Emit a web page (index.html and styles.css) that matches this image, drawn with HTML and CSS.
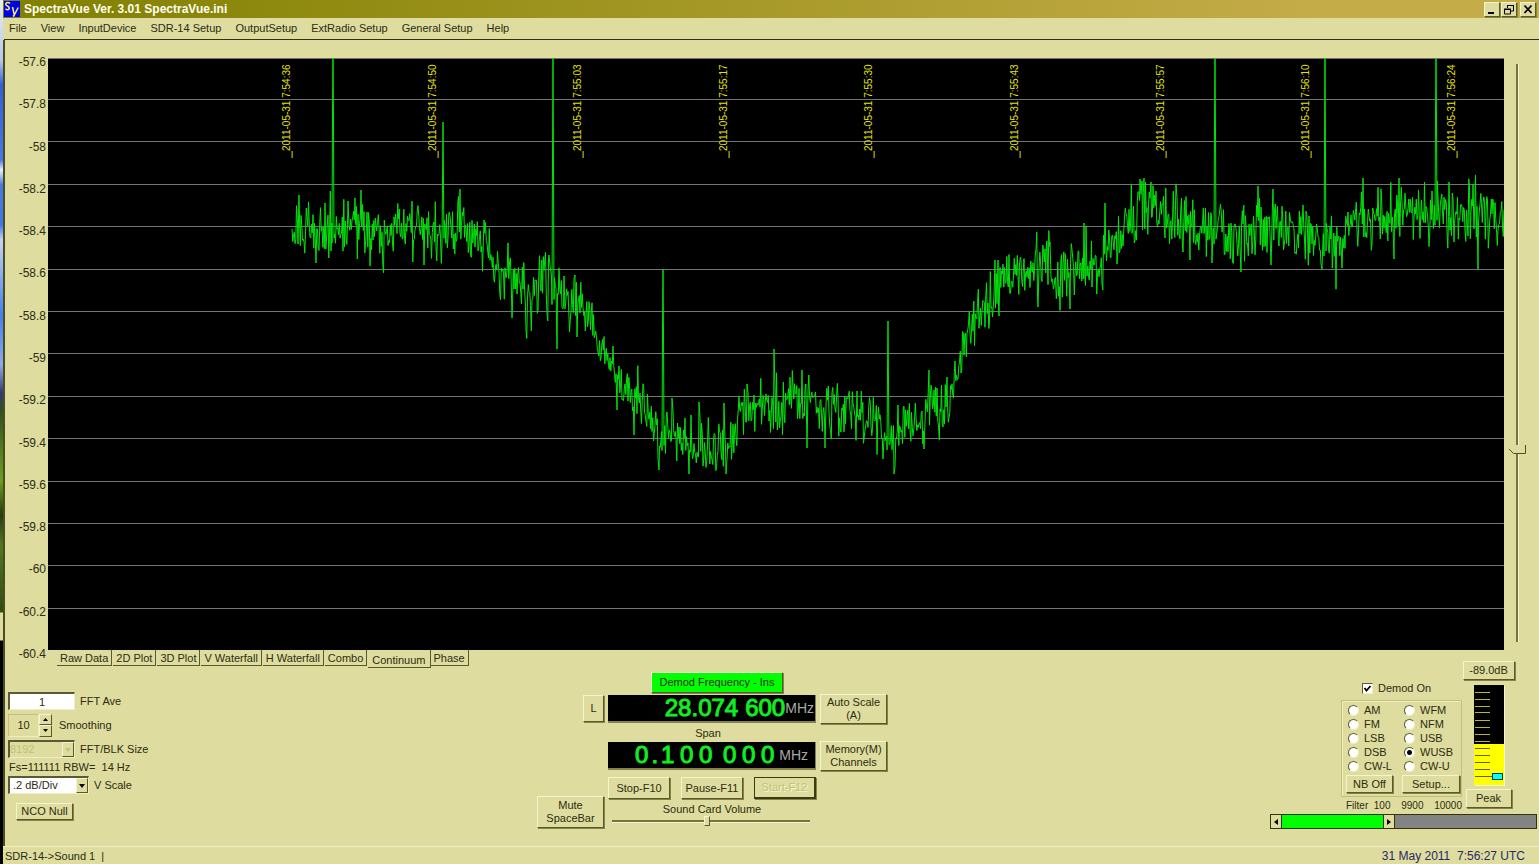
FILE: index.html
```html
<!DOCTYPE html>
<html lang="en">
<head>
<meta charset="utf-8">
<title>SpectraVue Ver. 3.01 SpectraVue.ini</title>
<link rel="stylesheet" href="styles.css">
</head>
<body>
<div class="desktop">
<div class="window">
  <header class="titlebar">
    <svg class="app-icon" width="16" height="16" viewBox="0 0 16 16" aria-hidden="true"><rect width="16" height="16" fill="#0000f0"/><path d="M6 2.500Q4.500 1 2.500 1.800Q.8 3 2.500 4.500L4.700 5.800Q6 7.500 4.300 8.500Q2.500 9 1.500 7.800M8.500 6L10.300 14L14.200 6.500M10.300 14L9 15.500" fill="none" stroke="#f4f060" stroke-width="1.500"/></svg>
    <h1 class="title">SpectraVue Ver. 3.01 SpectraVue.ini</h1>
    <div class="window-buttons">
      <button class="win-btn" aria-label="Minimize"><svg width="12" height="11" viewBox="0 0 12 11"><path d="M2 9h6" stroke="#000" stroke-width="2"/></svg></button>
      <button class="win-btn" aria-label="Restore"><svg width="12" height="11" viewBox="0 0 12 11"><path d="M4.500 4V1.500h6V7H8M4 1.500h7M1.500 5.500h6V10h-6zM1 5h7" fill="none" stroke="#000"/></svg></button>
      <button class="win-btn win-close" aria-label="Close"><svg width="12" height="11" viewBox="0 0 12 11"><path d="M2.500 1.500L9.500 9M9.500 1.500L2.500 9" stroke="#000" stroke-width="1.800"/></svg></button>
    </div>
  </header>
  <nav class="menubar">
    <button class="menu">File</button><button class="menu">View</button><button class="menu">InputDevice</button><button class="menu">SDR-14 Setup</button><button class="menu">OutputSetup</button><button class="menu">ExtRadio Setup</button><button class="menu">General Setup</button><button class="menu">Help</button>
  </nav>
  <main class="client">
    <section class="chart">
      <div class="axis">
        <span>-57.6</span><span>-57.8</span><span>-58</span><span>-58.2</span><span>-58.4</span><span>-58.6</span><span>-58.8</span><span>-59</span><span>-59.2</span><span>-59.4</span><span>-59.6</span><span>-59.8</span><span>-60</span><span>-60.2</span><span>-60.4</span>
      </div>
      <div class="plot">
        <svg class="trace" viewBox="48 58 1456 592" preserveAspectRatio="none" role="img" aria-label="Continuum plot">
          <g id="grid" class="grid-lines"></g>
          <path id="trace" class="trace-line"/>
        </svg>
        <div class="times">
          <span class="time">2011-05-31 7:54:36</span><span class="time">2011-05-31 7:54:50</span><span class="time">2011-05-31 7:55:03</span><span class="time">2011-05-31 7:55:17</span><span class="time">2011-05-31 7:55:30</span><span class="time">2011-05-31 7:55:43</span><span class="time">2011-05-31 7:55:57</span><span class="time">2011-05-31 7:56:10</span><span class="time">2011-05-31 7:56:24</span>
        </div>
      </div>
      <div class="level"><input class="level-slider" type="range" min="0" max="100" value="33" aria-label="Vertical offset"></div>
    </section>
    <section class="panel">
      <div class="tabs" role="tablist">
        <button class="tab" role="tab">Raw Data</button><button class="tab" role="tab">2D Plot</button><button class="tab" role="tab">3D Plot</button><button class="tab" role="tab">V Waterfall</button><button class="tab" role="tab">H Waterfall</button><button class="tab" role="tab">Combo</button><button class="tab tab-active" role="tab" aria-selected="true">Continuum</button><button class="tab" role="tab">Phase</button>
      </div>
      <div class="fft">
        <div class="field"><input class="box fft-ave" id="ave" type="text" value="1"><label for="ave">FFT Ave</label></div>
        <div class="field field-smooth">
          <span class="spin"><input class="spin-box" id="smooth" type="text" value="10"><span class="spin-buttons"><button class="spin-btn" aria-label="Increase"><svg width="5" height="3" viewBox="0 0 5 3"><path d="M0 3L2.500 0L5 3z"/></svg></button><button class="spin-btn" aria-label="Decrease"><svg width="5" height="3" viewBox="0 0 5 3"><path d="M0 0L2.500 3L5 0z"/></svg></button></span></span>
          <label for="smooth">Smoothing</label>
        </div>
        <div class="field field-size"><span class="combo combo-off"><select class="box" id="blk" disabled><option>8192</option></select><span class="arrow"><svg width="6" height="4" viewBox="0 0 6 4"><path d="M0 0h6L3 4z"/></svg></span></span><label for="blk">FFT/BLK Size</label></div>
        <p class="rbw">Fs=111111 RBW=&nbsp; 14 Hz</p>
        <div class="field"><span class="combo combo-wide"><select class="box" id="vscale"><option>.2 dB/Div</option></select><span class="arrow"><svg width="6" height="4" viewBox="0 0 6 4"><path d="M0 0h6L3 4z"/></svg></span></span><label for="vscale">V Scale</label></div>
        <button class="btn nco">NCO Null</button>
      </div>
      <div class="tuning">
        <button class="btn demod-freq">Demod Frequency - Ins</button>
        <button class="btn lock">L</button>
        <output class="display"><span class="digits">28.074</span><span class="digits">600</span><span class="unit">MHz</span></output>
        <button class="btn tall">Auto Scale<br>(A)</button>
        <span class="span-label">Span</span>
        <output class="display display-span"><span class="cells"><i>0</i><i class="dot">.</i><i>1</i><i>0</i><i>0</i></span><span class="cells"><i>0</i><i>0</i><i>0</i></span><span class="unit">MHz</span></output>
        <button class="btn tall">Memory(M)<br>Channels</button>
        <button class="btn tall mute">Mute<br>SpaceBar</button>
        <div class="run">
          <div class="run-buttons"><button class="btn">Stop-F10</button><button class="btn">Pause-F11</button><button class="btn start" disabled>Start-F12</button></div>
          <label class="volume-label" for="volume">Sound Card Volume</label>
          <input class="volume" id="volume" type="range" min="0" max="100" value="48">
        </div>
      </div>
      <div class="receiver">
        <div class="receiver-main">
          <div class="demod">
            <label class="demod-on"><input class="check" type="checkbox" checked>Demod On</label>
            <fieldset class="modes" aria-label="Demodulation mode">
              <div class="mode-grid">
                <label class="mode"><input type="radio" name="mode">AM</label><label class="mode"><input type="radio" name="mode">WFM</label>
                <label class="mode"><input type="radio" name="mode">FM</label><label class="mode"><input type="radio" name="mode">NFM</label>
                <label class="mode"><input type="radio" name="mode">LSB</label><label class="mode"><input type="radio" name="mode">USB</label>
                <label class="mode"><input type="radio" name="mode">DSB</label><label class="mode"><input type="radio" name="mode" checked>WUSB</label>
                <label class="mode"><input type="radio" name="mode">CW-L</label><label class="mode"><input type="radio" name="mode">CW-U</label>
              </div>
              <div class="mode-buttons"><button class="btn nb">NB Off</button><button class="btn setup">Setup...</button></div>
            </fieldset>
            <div class="filter-text"><span>Filter&nbsp; 100</span><span>9900</span><span>10000</span></div>
          </div>
          <div class="signal">
            <button class="btn db">-89.0dB</button>
            <svg class="meter" width="30" height="100" viewBox="0 0 30 100" role="img" aria-label="Signal level">
              <rect width="30" height="100"/><rect y="59" width="30" height="41" fill="#ffff00"/>
              <path d="M1 7.500h15M1 14.500h15M1 21.500h15M1 27.500h15M1 35.500h15M1 42.500h15M1 49.500h15M1 56.500h15" stroke="#b8b820"/>
              <path d="M1 63.500h15M1 70.500h15M1 77.500h15M1 84.500h15M1 91.500h17" stroke="#606000"/>
              <rect x="18.500" y="88.500" width="10" height="6" fill="#00ffff" stroke="#004060"/>
            </svg>
            <button class="btn peak">Peak</button>
          </div>
        </div>
        <div class="filter-bar">
          <button class="bar-btn" aria-label="Low cut"><svg width="4" height="6" viewBox="0 0 4 6"><path d="M4 0v6L0 3z"/></svg></button>
          <span class="pass"></span>
          <button class="bar-btn" aria-label="High cut"><svg width="4" height="6" viewBox="0 0 4 6"><path d="M0 0v6L4 3z"/></svg></button>
          <span class="rest"></span>
        </div>
      </div>
    </section>
  </main>
  <footer class="status"><span>SDR-14-&gt;Sound 1&nbsp; |</span><time class="clock">31 May 2011&nbsp; 7:56:27 UTC</time></footer>
</div>
</div>
<script src="trace.js"></script>
</body>
</html>
```
FILE: styles.css
```css
* { box-sizing: border-box; }
body {
  margin: 0;
  font-family: "Liberation Sans", Arial, sans-serif;
  font-size: 11px;
  line-height: 13px;
  color: #2c2c10;
}
button, input, select { font: inherit; color: inherit; margin: 0; }
button { padding: 0; border: 0; background: none; white-space: nowrap; }
.desktop {
  height: 100vh;
  display: flex;
  padding-left: 3px;
  background: linear-gradient(#e8ecf4 0, #b8c8e8 60px, #3060e0 85px, #4878e8 160px, #e8f0f8 170px, #4878e0 185px, #3f78e8 225px, #c8d4ec 240px, #4080f0 315px, #90a8e8 365px, #303878 393px, #305020 410px, #68a020 480px, #283c10 515px, #507820 545px, #304c10 612px, #dedd9f 613px, #dedd9f 640px, #000 641px);
}
.window { flex: 1; display: flex; flex-direction: column; background: #dedd9f; min-width: 0; }
.titlebar {
  height: 18px;
  display: flex;
  align-items: center;
  padding: 0 2px 0 1px;
  background: linear-gradient(90deg, #808000, #c4ac48 85%);
}
.title { flex: 1; margin: 0 0 0 4px; font-size: 12px; color: #fffff0; }
.window-buttons { display: flex; }
.win-btn, .btn {
  border: 1px solid;
  border-color: #f4f4d0 #5a5a28 #5a5a28 #f4f4d0;
  background: #dedd9f;
  box-shadow: 1px 1px 0 #83834a;
}
.win-btn { width: 16px; height: 15px; display: grid; place-items: center; margin-right: 1px; }
.win-close { margin-left: 2px; }
.menubar { height: 22px; display: flex; gap: 14px; padding-left: 5px; align-items: center; border-bottom: 1px solid #34340c; margin-left: 1px; }
.client { flex: 1; display: flex; flex-direction: column; border-left: 2px solid #4c4c20; padding-top: 18px; min-height: 0; }
.chart { flex: 1; display: flex; min-height: 0; }
.axis { width: 43px; display: flex; flex-direction: column; justify-content: space-between; align-items: flex-end; padding-right: 2px; margin: -2px 0 -11px; font-size: 12px; line-height: 13px; }
.plot { flex: 1; position: relative; background: #000; overflow: hidden; }
.trace { position: absolute; width: 100%; height: 100%; display: block; }
.grid-lines { stroke: #747474; }
.grid-lines line, .trace-line { vector-effect: non-scaling-stroke; }
.trace-line { fill: none; stroke: #00e40c; stroke-width: 1; stroke-linejoin: bevel; }
.times { position: absolute; top: 4px; left: 16%; width: 100%; display: flex; }
.time { flex: 0 0 10%; writing-mode: vertical-rl; transform: rotate(180deg); display: flex; font-size: 10px; line-height: 11px; color: #e0e010; height: 96px; }
.time::before { content: ""; width: 11px; height: 7px; border-left: 1px solid #e0e010; }
.level { width: 35px; display: flex; padding: 6px 5px 8px; }
.level-slider { appearance: none; writing-mode: vertical-lr; direction: rtl; width: 17px; height: 100%; background: none; }
.level-slider::-webkit-slider-runnable-track { width: 3px; height: 100%; border-left: 2px solid #74743c; border-right: 1px solid #f4f4d0; }
.level-slider::-webkit-slider-thumb { appearance: none; width: 17px; height: 9px; margin-left: -9px; background: url("data:image/svg+xml,%3Csvg xmlns='http://www.w3.org/2000/svg' width='17' height='9'%3E%3Cpath d='M0 4L4 0h13v9H5z' fill='%23dedd9f'/%3E%3Cpath d='M0 4l4.500 4.500h12V0' fill='none' stroke='%23505020'/%3E%3C/svg%3E"); }
.panel { display: grid; grid-template-columns: 532fr 352fr 650fr; grid-template-rows: 18px 178px; }
.tabs { grid-column: 1 / 3; display: flex; align-items: flex-start; padding-left: 52px; }
.tab { height: 16px; padding: 1px 3px 0; border: solid #5a5a28; border-width: 0 1px 1px 0; margin-right: 1px; }
.tab-active { height: 18px; padding: 3px 4px 0; margin: 0; }
.fft { grid-row: 2; padding: 24px 0 0 3px; display: flex; flex-direction: column; align-items: flex-start; }
.field { display: flex; align-items: center; gap: 5px; height: 18px; }
.field-smooth { height: 24px; margin-top: 3px; gap: 7px; }
.field-size { margin-top: 3px; }
.box { width: 100%; height: 18px; padding: 0 3px; border: 1px solid; border-width: 2px 1px 1px 2px; border-color: #5a5a38 #eeeec0 #eeeec0 #5a5a38; border-radius: 0; background: #fff; appearance: none; }
.fft-ave { width: 67px; text-align: center; }
.spin { display: flex; height: 23px; }
.spin-box { width: 31px; border: 1px solid; border-color: #c2c178 #eeeec0 #eeeec0 #c2c178; background: #dedd9f; text-align: center; padding: 0; }
.spin-buttons { display: flex; flex-direction: column; }
.spin-btn { flex: 1; width: 13px; display: grid; place-items: center; border: 1px solid; border-color: #f4f4d0 #5a5a28 #5a5a28 #f4f4d0; }
.combo { position: relative; width: 67px; display: flex; }
.combo-wide { width: 81px; }
.arrow { position: absolute; top: 2px; right: 1px; width: 12px; height: 15px; display: grid; place-items: center; background: #dedd9f; border: 1px solid; border-color: #f4f4d0 #5a5a28 #5a5a28 #f4f4d0; pointer-events: none; }
.combo-off .box { background: #dedd9f; color: #c2c178; opacity: 1; padding-left: 0; }
.combo-off .arrow { fill: #c2c178; }
.rbw { margin: 3px 0 2px 1px; }
.nco { width: 57px; height: 17px; margin: 9px 0 0 8px; }
.tuning { grid-row: 2; grid-column: 2; padding-top: 4px; display: grid; grid-template-columns: 67px 208px 67px; grid-template-rows: 21px 31px 16px 31px 1fr; column-gap: 4px; row-gap: 0; align-items: center; justify-items: center; align-content: start; }
.demod-freq { grid-column: 2; width: 132px; height: 21px; background: #00ff00; margin-left: 10px; }
.lock { grid-row: 2; grid-column: 1; width: 21px; height: 27px; justify-self: end; }
.display { grid-column: 2; width: 100%; height: 28px; display: flex; align-items: center; justify-content: flex-end; gap: 5px; padding-right: 2px; background: #000; border-bottom: 2px solid #83834a; border-right: 1px solid #83834a; color: #10f020; font-size: 24px; line-height: 24px; -webkit-text-stroke: 1px #10f020; }
.unit { font-size: 14px; color: #a8a8a8; -webkit-text-stroke: 0; margin-left: -4px; }
.display:not(.display-span) { gap: 7px; padding-right: 1px; }
.display:not(.display-span) .unit { margin-left: -7px; }
.display-span { padding-right: 7px; }
.display-span .unit { margin-left: -3px; }
.cells { display: flex; }
.cells i { width: 19px; font-style: normal; text-align: center; }
.cells .dot { width: 7px; }
.tall { width: 100%; height: 30px; }
.span-label { grid-column: 2; margin-right: 8px; align-self: end; }
.mute { grid-row: 5; grid-column: 1; height: 32px; align-self: start; margin-top: 25px; }
.run { grid-row: 5; grid-column: 2; width: 100%; align-self: start; padding-top: 6px; display: flex; flex-direction: column; }
.run-buttons { display: flex; justify-content: space-between; margin-bottom: 4px; }
.run-buttons .btn { width: 62px; height: 22px; }
.run-buttons .start { border: 2px solid #3c3c14; border-top-width: 1px; border-left-width: 1px; color: #c2c178; text-shadow: 1px 1px 0 #f4f4d0; }
.volume-label { text-align: center; }
.volume { appearance: none; height: 10px; background: none; margin: 0 6px 0 4px; }
.volume::-webkit-slider-runnable-track { height: 3px; border-top: 2px solid #74743c; border-bottom: 1px solid #f4f4d0; }
.volume::-webkit-slider-thumb { appearance: none; width: 6px; height: 10px; margin-top: -6px; background: #dedd9f; border: 1px solid; border-color: #f4f4d0 #5a5a28 #5a5a28 #f4f4d0; }
.receiver { grid-column: 3; grid-row: 1 / 3; padding: 11px 2px 0 0; display: flex; flex-direction: column; align-items: flex-end; }
.receiver-main { display: flex; padding-right: 22px; }
.demod { width: 121px; padding-top: 21px; display: flex; flex-direction: column; }
.demod-on { display: flex; align-items: center; gap: 5px; padding-left: 21px; }
.check { appearance: none; width: 11px; height: 11px; border: 1px solid; border-color: #5a5a38 #eeeec0 #eeeec0 #5a5a38; background: #fff url("data:image/svg+xml,%3Csvg xmlns='http://www.w3.org/2000/svg' width='9' height='9'%3E%3Cpath d='M1.500 4l2 2.500L7.500 2' fill='none' stroke='black' stroke-width='1.800'/%3E%3C/svg%3E"); }
.modes { margin: 5px 0 0; padding: 2px 1px 1px 6px; border: 1px solid #c2c178; box-shadow: inset 1px 1px 0 #eeeec0; height: 97px; min-width: 0; }
.mode-grid { display: grid; grid-template-columns: 56px 1fr; }
.mode { display: flex; align-items: center; gap: 5px; height: 14px; }
.mode input { appearance: none; width: 11px; height: 11px; border: 1px solid; border-color: #5a5a38 #eeeec0 #eeeec0 #5a5a38; border-radius: 50%; background: #fff; }
.mode input:checked { background: radial-gradient(circle, #000 0 2px, #fff 3px); }
.mode-buttons { display: flex; justify-content: space-between; margin: 2px 0 0 -2px; }
.mode-buttons .btn { height: 18px; }
.nb { width: 47px; }
.setup { width: 58px; }
.filter-text { display: flex; justify-content: space-between; font-size: 10px; padding-left: 5px; margin-top: 2px; }
.signal { width: 53px; display: flex; flex-direction: column; align-items: center; }
.db { width: 52px; height: 19px; }
.meter { margin: 5px 0 4px; box-shadow: 1px 1px 0 #f4f4d0; }
.peak { width: 46px; height: 19px; }
.filter-bar { width: 267px; height: 15px; margin-top: 2px; display: flex; border: 1px solid #34340c; }
.bar-btn { width: 10px; display: grid; place-items: center; }
.pass { flex: 102; background: #00ff00; border: solid #34340c; border-width: 0 1px; }
.rest { flex: 142; background: #838383; border-left: 1px solid #34340c; }
.status { height: 18px; display: flex; justify-content: space-between; align-items: flex-end; padding: 0 14px 0 2px; border-top: 1px solid #f0f0c4; line-height: 15px; }
.clock { font-size: 12px; color: #28286c; }
```
FILE: trace.js
```js
// Continuum trace: a slowly varying level, receiver noise, and interference peaks.
const level = [292,228,333,228,360,226,385,235,420,231,445,228,458,222,470,242,485,246,500,270,515,290,530,298,545,280,560,298,580,302,600,340,615,378,640,408,660,435,700,442,720,447,737,436,738,405,780,405,800,400,820,405,850,412,880,422,895,446,910,425,925,420,930,398,942,415,955,393,965,338,980,315,995,298,1005,270,1040,268,1060,278,1080,264,1100,264,1115,240,1125,220,1145,206,1165,214,1190,230,1220,229,1240,242,1260,225,1290,229,1310,236,1340,246,1355,215,1390,219,1410,206,1425,222,1440,206,1455,222,1470,209,1490,214,1504,222];
const marks = [292,229,299,195,316,263,348,201,361,190,370,266,424,265,460,189,484,220,512,318,526,330,549,255,557,349,564,276,575,275,577,337,613,346,617,410,634,435,659,470,672,398,689,474,699,402,724,403,726,474,747,384,774,349,802,370,807,448,825,448,857,391,883,459,894,474,898,405,924,449,929,370,947,377,955,361,995,260,998,260,999,316,1038,307,1047,241,1050,242,1070,309,1084,223,1086,226,1092,287,1105,203,1117,264,1140,179,1142,181,1151,182,1176,184,1190,260,1212,263,1241,272,1258,186,1271,265,1273,189,1322,269,1342,268,1363,178,1394,259,1399,178,1449,182,1454,242,1473,184,1478,269];
const peaks = [[333,50,113],[443,122,180],[553,50,160],[663,269,327],[888,321,372],[1215,50,125],[1325,50,152],[1436,50,115]];
const step = 0.75;

let seed = 90210;
function random() {
  seed = (seed * 16807) % 2147483647;
  return seed / 2147483647;
}
function levelAt(x) {
  let i = 0;
  while (i < level.length - 4 && level[i + 2] < x) i += 2;
  const t = (x - level[i]) / (level[i + 2] - level[i]);
  return level[i + 1] + t * (level[i + 3] - level[i + 1]);
}

const points = [];
for (let x = 292; x <= 1504; x += step) {
  const slope = Math.abs(levelAt(x + 4) - levelAt(x - 4));
  const spread = slope > 12 ? 20 : 26;
  points.push([x, levelAt(x) + (random() + random() + random() + random() - 2) * spread]);
}
for (let i = 0; i < marks.length; i += 2) {
  points[Math.round((marks[i] - 292) / step)] = [marks[i], marks[i + 1]];
}
for (const [x, top, shoulder] of peaks) {
  const n = points.findIndex(p => p[0] >= x - 1);
  points.splice(n, 3,
    [x - 1, levelAt(x) + 15], [x - 0.5, shoulder], [x, top],
    [x + 0.5, shoulder + 10], [x + 1, levelAt(x) + 10]);
}
document.getElementById("trace").setAttribute("d",
  "M" + points.map(p => p[0].toFixed(1) + " " + p[1].toFixed(1)).join("L"));

const grid = document.getElementById("grid");
for (let i = 0; i < 14; i++) {
  const y = Math.floor(57 + i * 42.4) + 0.5 + (i === 0 ? 1 : 0);
  const line = document.createElementNS("http://www.w3.org/2000/svg", "line");
  line.setAttribute("x1", 48);
  line.setAttribute("x2", 1504);
  line.setAttribute("y1", y);
  line.setAttribute("y2", y);
  grid.append(line);
}
```
